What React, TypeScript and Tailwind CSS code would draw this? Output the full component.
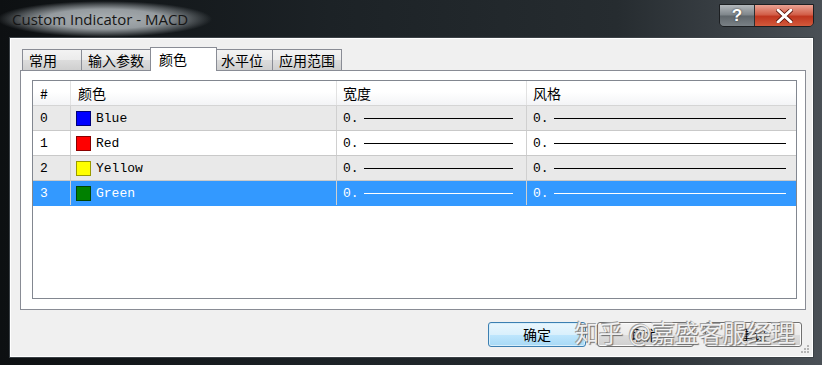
import React from 'react';

const rows = [
  { id: 0, name: 'Blue', color: '#0000ff', border: '#00007a' },
  { id: 1, name: 'Red', color: '#ff0000', border: '#8a0000' },
  { id: 2, name: 'Yellow', color: '#ffff00', border: '#9a9a00' },
  { id: 3, name: 'Green', color: '#008000', border: '#004400' },
];

const tabs = [
  { label: '常用', w: 'w-[60px]' },
  { label: '输入参数', w: 'w-[70px]' },
  { label: '颜色', w: 'w-[67px]', active: true },
  { label: '水平位', w: 'w-[58px]' },
  { label: '应用范围', w: 'w-[69px]' },
];

const cjk = "font-['Noto_Sans_CJK_SC',sans-serif]";
const mono = "font-['Liberation_Mono','Noto_Sans_CJK_SC',monospace]";

function Cell({ children, className = '' }: { children?: React.ReactNode; className?: string }) {
  return <div className={`h-full flex items-center border-r border-[#d0d0d0] ${className}`}>{children}</div>;
}

export default function App() {
  return (
    <div className="relative w-[822px] h-[365px] overflow-hidden flex flex-col pl-[9px] pr-[8px] pb-[7px] bg-[linear-gradient(90deg,#0d1012_0%,#1c2226_40%,#262c30_75%,#4a5056_100%)]">
      {/* title bar */}
      <div className="h-[37px] flex items-start shrink-0">
        <div className="mt-[1px] -ml-[12px] pt-[8px] pb-[8px] pl-[15px] pr-[24px] text-[15px] leading-[20px] text-[#161616] font-['Open_Sans',sans-serif] bg-[radial-gradient(closest-side,#aab0b3_0%,#959b9f_55%,rgba(120,126,130,0.6)_80%,rgba(30,34,38,0)_100%)]">
          Custom Indicator - MACD
        </div>
        <div className="ml-auto mt-[4px] flex h-[23px] rounded-b-[5px] border border-[#1c1f22] overflow-hidden">
          <div className="w-[35px] flex items-center justify-center bg-[linear-gradient(180deg,#b3b8bc_0%,#7e858a_48%,#5f666b_52%,#7a8186_100%)] border-r border-[#2a2e31] text-white font-bold text-[17px] leading-none font-['Liberation_Sans',sans-serif] [text-shadow:0_0_2px_#333]">
            ?
          </div>
          <div className="w-[58px] flex items-center justify-center bg-[linear-gradient(180deg,#e9a293_0%,#d3604a_45%,#c0361f_55%,#d25a3c_100%)]">
            <svg width="17" height="14" viewBox="0 0 17 14">
              <path d="M2 1 L15 13 M15 1 L2 13" stroke="#5a1208" strokeWidth="4.5" strokeLinecap="round" />
              <path d="M2 1 L15 13 M15 1 L2 13" stroke="#ffffff" strokeWidth="3" strokeLinecap="round" />
            </svg>
          </div>
        </div>
      </div>

      {/* client area */}
      <div className="relative flex-1 flex flex-col border border-[#3b4146] bg-[#f0f0f0] shadow-[inset_0_0_0_1px_#ffffff] pt-[9px] pl-[10px] pr-[7px]">
        {/* tabs */}
        <div className={`relative z-10 flex items-end h-[24px] -mb-px pl-[2px] ${cjk} text-[14px] text-black`}>
          {tabs.map((t) =>
            t.active ? (
              <div key={t.label} className={`${t.w} -mx-[2px] h-[24px] bg-white border border-b-0 border-[#898c95] pl-[8px] pt-[1px] leading-[20px] z-10`}>
                {t.label}
              </div>
            ) : (
              <div key={t.label} className={`${t.w} h-[22px] border border-[#898c95] border-l-0 first:border-l bg-[linear-gradient(180deg,#f3f3f3_0%,#ebebeb_50%,#dcdcdc_52%,#cfcfcf_100%)] pl-[6px] leading-[20px]`}>
                {t.label}
              </div>
            )
          )}
        </div>

        {/* tab panel */}
        <div className="h-[240px] border border-[#898c95] bg-white flex flex-col pt-[9px] pb-[10px] pl-[11px] pr-[8px]">
          <div className={`flex-1 border border-[#828790] bg-white flex flex-col text-[13px] ${mono}`}>
            <div className={`grid grid-cols-[38px_266px_190px_1fr] h-[25px] shrink-0 border-b border-[#d5d5d5] bg-[linear-gradient(180deg,#ffffff_0%,#ffffff_45%,#f3f4f6_100%)] ${cjk} text-[14px] text-black`}>
              <Cell className="pl-[7px] border-[#e2e2e2]">#</Cell>
              <Cell className="pl-[7px] border-[#e2e2e2]">颜色</Cell>
              <Cell className="pl-[6px] border-[#e2e2e2]">宽度</Cell>
              <Cell className="pl-[6px] border-r-0">风格</Cell>
            </div>
            {rows.map((r) => {
              const sel = r.id === 3;
              const bg = sel ? 'bg-[#3399ff] text-white' : r.id % 2 === 0 ? 'bg-[#e9e9e9] text-black' : 'bg-white text-black';
              const line = sel ? 'bg-white' : 'bg-black';
              return (
                <div key={r.id} className={`grid grid-cols-[38px_266px_190px_1fr] h-[25px] border-b ${sel ? 'border-[#3399ff]' : 'border-[#c9c9c9]'} ${bg}`}>
                  <Cell className="pl-[7px] pt-[1px]">{r.id}</Cell>
                  <Cell className="pl-[5px] gap-[5px] pt-[1px]">
                    <span className="w-[15px] h-[15px] border" style={{ background: r.color, borderColor: r.border }} />
                    {r.name}
                  </Cell>
                  <Cell className="pl-[6px] pr-[13px] gap-[5px] pt-[1px]">
                    <span>0.</span>
                    <span className={`flex-1 h-px ${line}`} />
                  </Cell>
                  <Cell className="pl-[6px] pr-[10px] gap-[5px] pt-[1px] border-r-0">
                    <span>0.</span>
                    <span className={`flex-1 h-px ${line}`} />
                  </Cell>
                </div>
              );
            })}
          </div>
        </div>

        {/* buttons */}
        <div className={`flex justify-end gap-[11px] mt-[12px] pr-[4px] ${cjk} text-[14px] text-black`}>
          <div className="w-[98px] h-[25px] rounded-[3px] border border-[#3c7fb1] bg-[linear-gradient(180deg,#eaf6fd_0%,#d9f0fc_50%,#bee6fd_51%,#a7d9f5_100%)] shadow-[inset_0_0_0_1px_#d6eefb] flex items-center justify-center">
            确定
          </div>
          <div className="w-[97px] h-[25px] rounded-[3px] border border-[#707070] bg-[linear-gradient(180deg,#f2f2f2_0%,#ebebeb_50%,#dddddd_51%,#cfcfcf_100%)] shadow-[inset_0_0_0_1px_#fbfbfb] flex items-center justify-center">
            取消
          </div>
          <div className="w-[97px] h-[25px] rounded-[3px] border border-[#707070] bg-[linear-gradient(180deg,#f2f2f2_0%,#ebebeb_50%,#dddddd_51%,#cfcfcf_100%)] shadow-[inset_0_0_0_1px_#fbfbfb] flex items-center justify-center">
            重设
          </div>
        </div>

        {/* size grip */}
        <svg className="absolute right-[3px] bottom-[3px]" width="10" height="10" viewBox="0 0 10 10">
          {[[7, 1], [4, 4], [7, 4], [1, 7], [4, 7], [7, 7]].map(([x, y]) => (
            <rect key={`${x}-${y}`} x={x} y={y} width="2" height="2" fill="#b5b5b5" />
          ))}
        </svg>
      </div>

      {/* watermark */}
      <div className={`absolute left-[575px] top-[316px] whitespace-nowrap text-[24px] leading-[32px] text-white/85 ${cjk} [text-shadow:1px_1px_1px_#6b6b6b,-1px_-1px_0_#a0a0a0]`}>
        知乎 @嘉盛客服经理
      </div>
    </div>
  );
}
